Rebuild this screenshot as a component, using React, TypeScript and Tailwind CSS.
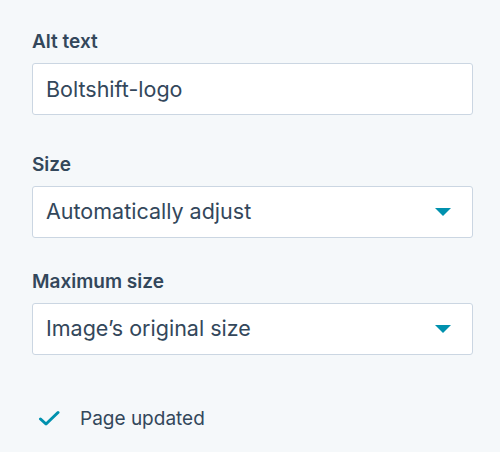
import { useState } from 'react';

const FONT = "font-['Inter',sans-serif]";

function Caret() {
  return (
    <svg width="16" height="8" viewBox="0 0 16 8" className="shrink-0">
      <path d="M0 0 L16 0 L8 8 Z" fill="#0091ae" />
    </svg>
  );
}

function SelectBox({ value }: { value: string }) {
  return (
    <div className="flex h-[52px] items-center justify-between rounded-[3px] border border-[#cbd6e2] bg-white pl-[13px] pr-[21px]">
      <span className="text-[21.5px] leading-none text-[#33475b]">{value}</span>
      <Caret />
    </div>
  );
}

export default function App() {
  const [alt, setAlt] = useState('Boltshift-logo');

  return (
    <div className={`${FONT} h-[452px] w-[500px] bg-[#f5f8fa] pl-8 pr-[27px] pt-[30px] text-[#33475b]`}>
      {/* alt text */}
      <label className="mb-[9px] block text-[19px] font-semibold leading-[24px]">
        Alt text
      </label>
      <input
        value={alt}
        onChange={(e) => setAlt(e.target.value)}
        className="block h-[52px] w-full rounded-[3px] border border-[#cbd6e2] bg-white px-[13px] text-[21.5px] text-[#33475b] outline-none"
      />

      {/* size */}
      <label className="mb-[9px] mt-[38px] block text-[19px] font-semibold leading-[24px]">
        Size
      </label>
      <SelectBox value="Automatically adjust" />

      {/* max size */}
      <label className="mb-[9px] mt-[32px] block text-[19px] font-semibold leading-[24px]">
        Maximum size
      </label>
      <SelectBox value="Image’s original size" />

      {/* status */}
      <div className="mt-[51px] flex h-[24px] items-center">
        <svg width="22" height="16" viewBox="0 0 22 16" className="ml-[6px]">
          <path
            d="M2.5 9 L8 14 L20 2.5"
            fill="none"
            stroke="#0091ae"
            strokeWidth="3"
            strokeLinecap="round"
            strokeLinejoin="round"
          />
        </svg>
        <span className="ml-[20px] text-[19px] leading-none">Page updated</span>
      </div>
    </div>
  );
}
